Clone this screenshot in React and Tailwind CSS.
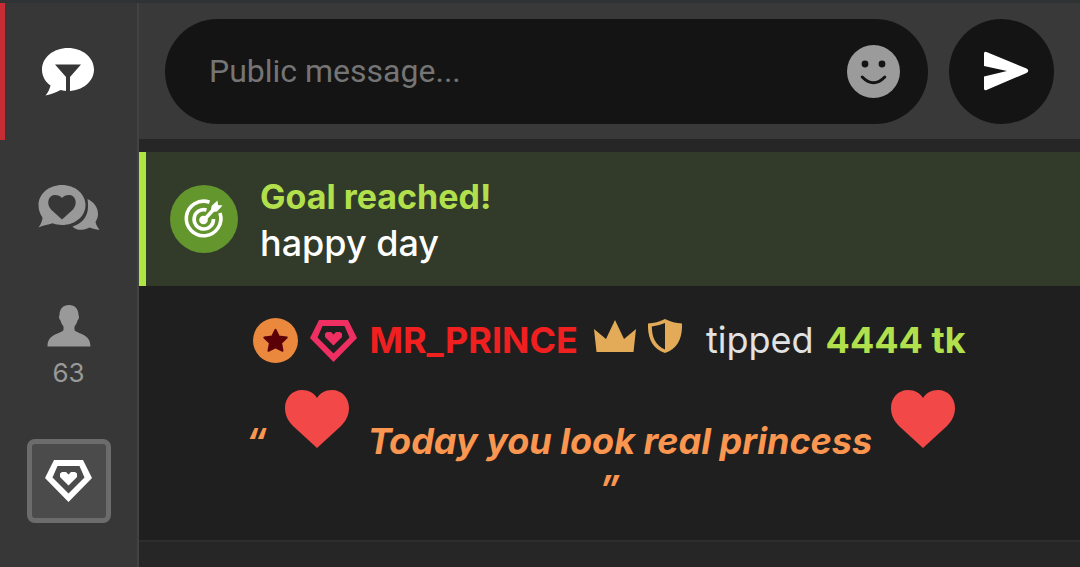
import React, { useState } from "react";

const HEART_PATH =
  "M32 58 L8 36 C3 31 0 25 0 18 C0 8 7 0 17 0 C24 0 29 3 32 8 C35 3 40 0 47 0 C57 0 64 8 64 18 C64 25 61 31 56 36 Z";

const Heart = () => (
  <svg viewBox="0 0 64 64" className="inline-block w-16 h-16 mx-[10px] align-baseline">
    <path d={HEART_PATH} fill="#f24848" />
  </svg>
);

const GemHeart = ({ className }) => (
  <svg viewBox="0 0 47 42" className={className} fill="currentColor">
    <path
      fillRule="evenodd"
      d="M9 0 H38 L47 18 L23.5 42 L0 18 Z M12.5 6 L7.5 17.500 L23.5 33.500 L39.500 17.500 L34.500 6 Z"
    />
    <path d="M23.500 25.500 L15 17 V13.500 L17 12 H21 L23.500 14.500 L26 12 H30 L32 13.500 V17 Z" />
  </svg>
);

const ChatFilterIcon = () => (
  <svg viewBox="0 0 52 48" className="w-[52px] h-12">
    <path
      d="M26 0 C40.500 0 52 9.500 52 21.500 C52 33.500 40.500 43 26 43 C23.500 43 21 42.700 18.500 42.100 C14 44.500 9 46.500 3.500 47.500 C6 44.500 7.800 41 8.500 37.500 C3 33.500 0 28 0 21.500 C0 9.500 11.500 0 26 0 Z"
      fill="#fff"
    />
    <path d="M13 16.500 H39 L28 29 V44 H24 V29 Z" fill="#373737" />
  </svg>
);

const ChatHeartIcon = () => (
  <svg viewBox="0 0 62 46" className="w-[62px] h-[46px]" fill="#999">
    <path
      fillRule="evenodd"
      d="M24 0 C37 0 47.500 8.800 47.500 20 C47.500 31.500 37 40 24 40 C20.500 40 17.500 39.500 14.500 38.300 C10.500 39.500 5.500 40.500 0.500 42.500 C3 39 4.500 35.500 4.500 32.500 C2 29 0.500 25 0.500 20 C0.500 8.800 11 0 24 0 Z M24 34.500 L35 24.500 C40.500 18 37 10 31 10 C28 10 25.500 11 24 13 C22.500 11 20 10 17 10 C11 10 7.500 18 13 24.500 Z"
    />
    <path d="M49.500 14 C56 17 60 22.500 60 29 C60 32 59 34.500 57.500 37 C58 40 60 42.500 61.500 45 C58 44.500 54.500 43.500 51.500 42.500 C45 46 38 45.500 34.500 41.500 C43.500 39 50 31.500 50 22 C50 19 50 16.500 49.500 14 Z" />
  </svg>
);

const UserIcon = () => (
  <svg viewBox="0 0 44 42" className="w-11 h-[42px]" fill="#999">
    <path d="M22 0 C28 0 31.500 4 31.500 10 C32.500 11 32 14.500 30.500 15.500 C30 18 28.500 20 27.500 21.500 V25 C29.500 29 43.500 28 43.500 41.500 H0.500 C0.500 28 14.500 29 16.500 25 V21.500 C15.500 20 14 18 13.500 15.500 C12 14.500 11.500 11 12.500 10 C12.500 4 16 0 22 0 Z" />
  </svg>
);

const SmileIcon = () => (
  <svg viewBox="0 0 53 53" className="w-[53px] h-[53px]">
    <circle cx="26.500" cy="26.500" r="26.500" fill="#9b9b9b" />
    <circle cx="18" cy="19" r="3.400" fill="#141414" />
    <circle cx="35" cy="19" r="3.400" fill="#141414" />
    <path
      d="M15.200 32 Q26.500 43.500 37.800 32"
      fill="none"
      stroke="#141414"
      strokeWidth="3"
      strokeLinecap="round"
    />
  </svg>
);

const SendIcon = () => (
  <svg viewBox="0 0 46 40" className="w-[46px] h-10 ml-2">
    <path
      d="M1 2.500 Q1 0 3.500 1 L43.500 17.500 Q47 19.500 43.500 22 L3.500 39 Q1 40 1 37.500 V25.500 L24 20 L1 15 Z"
      fill="#fff"
    />
  </svg>
);

const GoalIcon = () => (
  <svg viewBox="0 0 68 68" className="w-[68px] h-[68px] shrink-0">
    <circle cx="34" cy="34" r="34" fill="#64962e" />
    <g fill="none" stroke="#fff" strokeWidth="3.600">
      <path d="M39.500 17.200 A17.300 17.300 0 1 0 50 28" />
      <path d="M36.500 25 A9.700 9.700 0 1 0 43.500 34" />
      <path d="M34 35 L44 24" />
    </g>
    <circle cx="33.500" cy="35" r="4.300" fill="#fff" />
    <path d="M41 26 L41.500 21 L47.500 15.500 L48 20 L52.500 20.500 L47 26.500 L42 27 Z" fill="#fff" />
  </svg>
);

const StarBadge = () => (
  <svg viewBox="0 0 46 46" className="w-[45px] h-[45px]">
    <circle cx="23" cy="23" r="23" fill="#ea883e" />
    <path
      d="M23 12 L26.500 19 L34.500 20 L28.700 25.500 L30.200 33.500 L23 30 L15.800 33.500 L17.300 25.500 L11.500 20 L19.500 19 Z"
      fill="#5c0008"
      stroke="#5c0008"
      strokeWidth="2"
      strokeLinejoin="round"
    />
  </svg>
);

const CrownIcon = () => (
  <svg viewBox="0 0 42 42" className="w-[42px] h-[42px]">
    <path d="M0 9 L12 19 L21 0 L30 19 L42 9 L39.500 32 H2.500 Z" fill="#e3ab57" />
  </svg>
);

const ShieldIcon = () => (
  <svg viewBox="0 0 34 44" className="w-[34px] h-11">
    <path
      fillRule="evenodd"
      d="M17 0 Q25 4 34 4.500 C34.500 18 30.500 29.500 17 34 C3.500 29.500 -0.500 18 0 4.500 Q9 4 17 0 Z M17 4 Q10 7 3.800 7.500 C4 18 7 26 17 30.500 Z"
      fill="#e3ab57"
    />
  </svg>
);

const Sidebar = () => (
  <nav className="flex flex-col w-[139px] shrink-0 bg-[#373737] border-r-2 border-[#424242]">
    <button
      aria-label="Public chat"
      className="flex items-center justify-center h-[137px] border-l-[5px] pr-[6px] border-[#c52c33]"
    >
      <ChatFilterIcon />
    </button>
    <button aria-label="Private messages" className="flex items-center justify-center h-[136px]">
      <ChatHeartIcon />
    </button>
    <button
      aria-label="Users"
      className="flex flex-col items-center justify-center gap-2 h-[136px] pt-2 text-[26px] leading-9 text-[#999]"
    >
      <UserIcon />
      63
    </button>
    <div className="flex items-center justify-center h-[138px]">
      <button
        aria-label="Fan club"
        className="flex items-center justify-center w-[84px] h-[84px] rounded-lg border-[5px] border-[#6c6c6c] bg-[#4b4b4b] text-white"
      >
        <GemHeart className="w-[47px] h-[42px]" />
      </button>
    </div>
  </nav>
);

const MessageForm = () => {
  const [message, setMessage] = useState("");

  const handleSubmit = (e) => {
    e.preventDefault();
    setMessage("");
  };

  return (
    <form
      onSubmit={handleSubmit}
      className="flex items-center gap-[21px] h-[136px] px-[26px] bg-[#393939]"
    >
      <div className="flex flex-1 items-center min-w-0 h-[105px] pl-11 pr-7 rounded-full bg-[#141414]">
        <input
          type="text"
          aria-label="Public message"
          placeholder="Public message..."
          value={message}
          onChange={(e) => setMessage(e.target.value)}
          className="flex-1 min-w-0 bg-transparent outline-none font-['Roboto',sans-serif] text-[32px] text-white placeholder:text-[#757575]"
        />
        <button type="button" aria-label="Emoji">
          <SmileIcon />
        </button>
      </div>
      <button
        type="submit"
        aria-label="Send"
        className="flex items-center justify-center w-[105px] h-[105px] shrink-0 rounded-full bg-[#141414]"
      >
        <SendIcon />
      </button>
    </form>
  );
};

const App = () => {
  return (
    <div className="flex min-h-screen border-t-[3px] border-[#303333] bg-[#262626] font-['Inter',sans-serif]">
      <Sidebar />

      <main className="flex flex-col flex-1 min-w-0">
        <MessageForm />

        {/* Goal banner */}
        <section className="flex items-center gap-[22px] h-[134px] mt-[13px] pl-6 border-l-[7px] border-[#aee542] bg-[#323a2a]">
          <GoalIcon />
          <div className="pt-[2px] leading-[46px]">
            <h2 className="text-[34px] font-bold text-[#b2e04c]">Goal reached!</h2>
            <p className="text-[36px] font-medium text-white">happy day</p>
          </div>
        </section>

        {/* Tip message */}
        <section className="pt-[31px] pb-7 text-[36px] leading-[47px] bg-[#1f1f1f] border-b-2 border-[#2d2d2d]">
          <div className="flex items-center justify-center">
            <StarBadge />
            <GemHeart className="w-[47px] h-[42px] ml-3 text-[#ef2f62]" />
            <span className="ml-3 font-bold text-[#f02020]">MR_PRINCE</span>
            <span className="flex items-center gap-3 ml-4 mr-6">
              <CrownIcon />
              <ShieldIcon />
            </span>
            <span className="text-[#e2e2e2]">tipped</span>
            <span className="ml-3 font-bold text-[#b2e04c]">4444 tk</span>
          </div>
          <p className="mt-[26px] text-center font-bold italic text-[#fa9650]">
            “ <Heart /> Today you look real princess <Heart />
            &nbsp;
            <br />”
          </p>
        </section>
      </main>
    </div>
  );
};

export default App;
